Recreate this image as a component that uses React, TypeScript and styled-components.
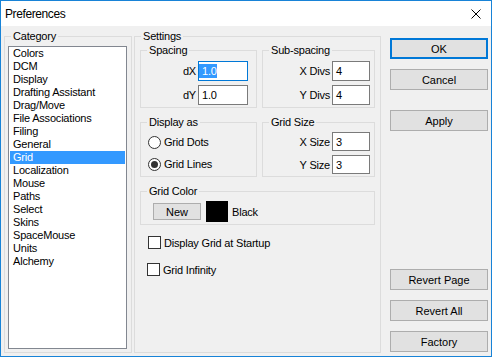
import React from 'react';
import styled, { createGlobalStyle } from 'styled-components';

const GlobalStyle = createGlobalStyle`
  html, body {
    margin: 0;
    padding: 0;
    background: #fff;
  }
  body {
    font-family: "Liberation Sans", Arial, sans-serif;
    font-size: 11px;
    letter-spacing: -0.2px;
    color: #000;
  }
`

const Window = styled.div`
  width: 492px;
  height: 357px;
  box-sizing: border-box;
  border: 1px solid #1883d7;
  background: #f0f0f0;
  display: flex;
  flex-direction: column;
`

const TitleBar = styled.div`
  height: 25px;
  flex: none;
  background: #fff;
  display: flex;
  align-items: center;
  justify-content: space-between;
  padding: 0 10px 0 4px;
  font-size: 12px;
  letter-spacing: -0.4px;
`

const Client = styled.div`
  flex: 1;
  min-height: 0;
  display: flex;
  padding: 4px 3px 3px 3px;
`

const Group = styled.fieldset<{ $width?: number }>`
  margin: 0;
  padding: 0;
  border: 1px solid #dcdcdc;
  min-width: 0;
  box-sizing: border-box;
  display: flex;
  flex-direction: column;
  ${p => p.$width ? `width: ${p.$width}px; flex: none;` : ''}
`

const Legend = styled.legend`
  padding: 0 2px;
  margin-left: 6px;
  line-height: 13px;
`

const GroupBody = styled.div<{ $pad: string }>`
  flex: 1;
  display: flex;
  flex-direction: column;
  padding: ${p => p.$pad};
`

const ListBox = styled.ul`
  flex: 1;
  margin: 0;
  padding: 0 1px;
  list-style: none;
  background: #fff;
  border: 1px solid #828790;
`

const ListItem = styled.li<{ $selected?: boolean }>`
  height: 13px;
  line-height: 13px;
  padding-left: 3px;
  white-space: nowrap;
  background: ${p => p.$selected ? '#3399ff' : 'transparent'};
  color: ${p => p.$selected ? '#fff' : '#000'};
`

const GroupRow = styled.div<{ $gap?: number }>`
  display: grid;
  grid-template-columns: 117px 113px;
  column-gap: 5px;
  margin-top: ${p => p.$gap ?? 0}px;
`

const FieldGrid = styled.div<{ $input: number; $right: number; $rowGap: number }>`
  display: grid;
  grid-template-columns: 1fr ${p => p.$input}px;
  column-gap: 2px;
  row-gap: ${p => p.$rowGap}px;
  align-items: center;
  padding-right: ${p => p.$right}px;
`

const FieldLabel = styled.span`
  text-align: right;
  white-space: nowrap;
`

const TextBox = styled.div<{ $h: number; $focused?: boolean }>`
  height: ${p => p.$h}px;
  box-sizing: border-box;
  border: 1px solid ${p => p.$focused ? '#0078d7' : '#7a7a7a'};
  background: #fff;
  display: flex;
  align-items: center;
  padding-left: 3px;
`

const Selection = styled.span`
  background: #3399ff;
  color: #fff;
  line-height: 14px;
  margin-left: -3px;
  padding-left: 3px;
`

const RadioRow = styled.label`
  height: 18px;
  display: flex;
  align-items: center;
  gap: 3px;
`

const RadioCircle = styled.span<{ $checked?: boolean }>`
  width: 13px;
  height: 13px;
  box-sizing: border-box;
  border: 1px solid #333;
  border-radius: 50%;
  background: #fff;
  display: flex;
  align-items: center;
  justify-content: center;

  &::after {
    content: '';
    width: 7px;
    height: 7px;
    border-radius: 50%;
    background: ${p => p.$checked ? '#333' : 'transparent'};
  }
`

const ColorRow = styled.div`
  display: flex;
  align-items: center;
  height: 21px;
`

const SmallButton = styled.button`
  width: 48px;
  height: 17px;
  padding: 0;
  margin-right: 5px;
  font: inherit;
  color: #000;
  background: #e1e1e1;
  border: 1px solid #adadad;
`

const Swatch = styled.span<{ $color: string }>`
  width: 22px;
  height: 21px;
  background: ${p => p.$color};
  margin-right: 4px;
`

const CheckRow = styled.label<{ $gap: number; $indent: number }>`
  display: flex;
  align-items: center;
  gap: 3px;
  height: 13px;
  margin-top: ${p => p.$gap}px;
  margin-left: ${p => p.$indent}px;
`

const CheckBox = styled.span`
  width: 13px;
  height: 13px;
  box-sizing: border-box;
  border: 1px solid #333;
  background: #fff;
`

const ButtonColumn = styled.div`
  width: 98px;
  flex: none;
  margin-left: 9px;
  padding: 8px 0 1px;
  display: flex;
  flex-direction: column;
`

const DialogButton = styled.button<{ $gap?: number | 'auto'; $default?: boolean }>`
  height: 21px;
  padding: 0;
  font: inherit;
  color: #000;
  background: #e1e1e1;
  border: ${p => p.$default ? '2px solid #0078d7' : '1px solid #adadad'};
  margin-top: ${p => p.$gap === 'auto' ? 'auto' : `${p.$gap ?? 0}px`};
`

const categories = [
  'Colors', 'DCM', 'Display', 'Drafting Assistant', 'Drag/Move', 'File Associations',
  'Filing', 'General', 'Grid', 'Localization', 'Mouse', 'Paths', 'Select', 'Skins',
  'SpaceMouse', 'Units', 'Alchemy',
];

export default function App() {
  return (
    <>
      <GlobalStyle />
      <Window>
        <TitleBar>
          <span>Preferences</span>
          <svg width="10" height="10" viewBox="0 0 10 10">
            <path d="M0.5 0.5 L9.5 9.5 M9.5 0.5 L0.5 9.5" stroke="#000" strokeWidth="1" />
          </svg>
        </TitleBar>
        <Client>
          <Group $width={128}>
            <Legend>Category</Legend>
            <GroupBody $pad="3px 4px 3px 3px">
              <ListBox>
                {categories.map(c => (
                  <ListItem key={c} $selected={c === 'Grid'}>{c}</ListItem>
                ))}
              </ListBox>
            </GroupBody>
          </Group>

          <Group $width={247} style={{ marginLeft: 2 }}>
            <Legend>Settings</Legend>
            <GroupBody $pad="1px 5px 0 5px">
              <GroupRow>
                <Group>
                  <Legend>Spacing</Legend>
                  <GroupBody $pad="4px 0 2px 0">
                    <FieldGrid $input={50} $right={8} $rowGap={4}>
                      <FieldLabel>dX</FieldLabel>
                      <TextBox $h={20} $focused><Selection>1.0</Selection></TextBox>
                      <FieldLabel>dY</FieldLabel>
                      <TextBox $h={20}>1.0</TextBox>
                    </FieldGrid>
                  </GroupBody>
                </Group>
                <Group>
                  <Legend>Sub-spacing</Legend>
                  <GroupBody $pad="4px 0 2px 0">
                    <FieldGrid $input={38} $right={4} $rowGap={4}>
                      <FieldLabel>X Divs</FieldLabel>
                      <TextBox $h={20}>4</TextBox>
                      <FieldLabel>Y Divs</FieldLabel>
                      <TextBox $h={20}>4</TextBox>
                    </FieldGrid>
                  </GroupBody>
                </Group>
              </GroupRow>

              <GroupRow $gap={8}>
                <Group>
                  <Legend>Display as</Legend>
                  <GroupBody $pad="4px 0 2px 7px" style={{ gap: 4 }}>
                    <RadioRow><RadioCircle />Grid Dots</RadioRow>
                    <RadioRow><RadioCircle $checked />Grid Lines</RadioRow>
                  </GroupBody>
                </Group>
                <Group>
                  <Legend>Grid Size</Legend>
                  <GroupBody $pad="3px 0 2px 0">
                    <FieldGrid $input={38} $right={4} $rowGap={4}>
                      <FieldLabel>X Size</FieldLabel>
                      <TextBox $h={19}>3</TextBox>
                      <FieldLabel>Y Size</FieldLabel>
                      <TextBox $h={19}>3</TextBox>
                    </FieldGrid>
                  </GroupBody>
                </Group>
              </GroupRow>

              <Group style={{ marginTop: 8 }}>
                <Legend>Grid Color</Legend>
                <GroupBody $pad="3px 0 2px 12px">
                  <ColorRow>
                    <SmallButton>New</SmallButton>
                    <Swatch $color="#000" />
                    <span>Black</span>
                  </ColorRow>
                </GroupBody>
              </Group>

              <CheckRow $gap={11} $indent={8}><CheckBox />Display Grid at Startup</CheckRow>
              <CheckRow $gap={14} $indent={7}><CheckBox />Grid Infinity</CheckRow>
            </GroupBody>
          </Group>

          <ButtonColumn>
            <DialogButton $default>OK</DialogButton>
            <DialogButton $gap={10}>Cancel</DialogButton>
            <DialogButton $gap={20}>Apply</DialogButton>
            <DialogButton $gap="auto">Revert Page</DialogButton>
            <DialogButton $gap={10}>Revert All</DialogButton>
            <DialogButton $gap={10}>Factory</DialogButton>
          </ButtonColumn>
        </Client>
      </Window>
    </>
  );
}
